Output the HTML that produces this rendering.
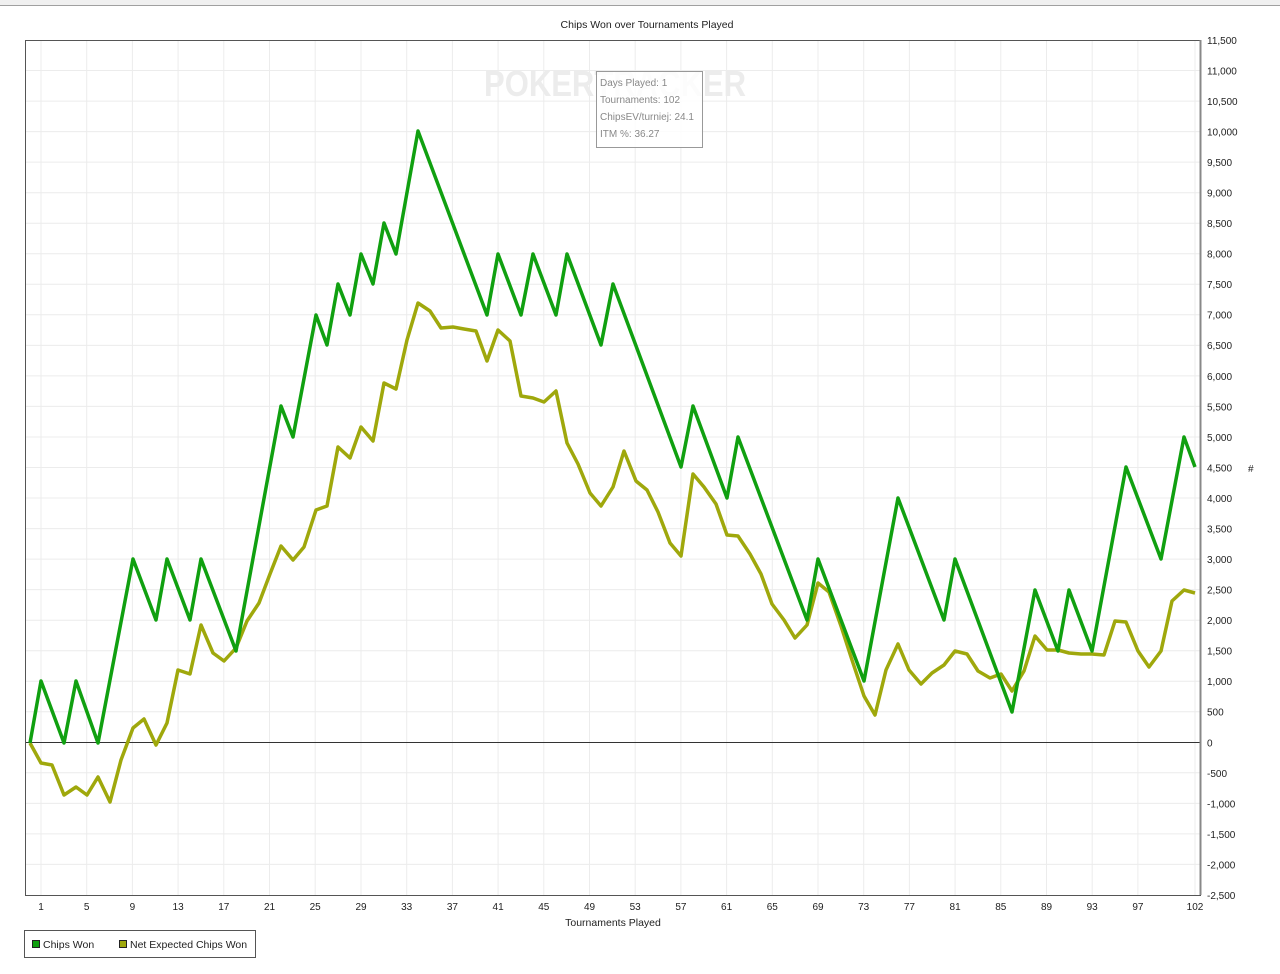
<!DOCTYPE html>
<html><head><meta charset="utf-8"><style>
html,body{margin:0;padding:0;background:#fff;width:1280px;height:974px;overflow:hidden}
svg text{font-family:"Liberation Sans",sans-serif;fill:#222}
</style></head><body>
<svg width="1280" height="974" xmlns="http://www.w3.org/2000/svg">
<rect x="0" y="0" width="1280" height="5" fill="#f0f0f0"/>
<line x1="0" y1="5.5" x2="1280" y2="5.5" stroke="#a0a0a0"/>
<text x="647" y="28" font-size="10.5" text-anchor="middle">Chips Won over Tournaments Played</text>
<g stroke="#ececec" stroke-width="1">
<line x1="25" x2="1200" y1="70.5" y2="70.5"/><line x1="25" x2="1200" y1="101.1" y2="101.1"/><line x1="25" x2="1200" y1="131.6" y2="131.6"/><line x1="25" x2="1200" y1="162.1" y2="162.1"/><line x1="25" x2="1200" y1="192.7" y2="192.7"/><line x1="25" x2="1200" y1="223.2" y2="223.2"/><line x1="25" x2="1200" y1="253.7" y2="253.7"/><line x1="25" x2="1200" y1="284.3" y2="284.3"/><line x1="25" x2="1200" y1="314.8" y2="314.8"/><line x1="25" x2="1200" y1="345.4" y2="345.4"/><line x1="25" x2="1200" y1="375.9" y2="375.9"/><line x1="25" x2="1200" y1="406.4" y2="406.4"/><line x1="25" x2="1200" y1="437" y2="437"/><line x1="25" x2="1200" y1="467.5" y2="467.5"/><line x1="25" x2="1200" y1="498" y2="498"/><line x1="25" x2="1200" y1="528.6" y2="528.6"/><line x1="25" x2="1200" y1="559.1" y2="559.1"/><line x1="25" x2="1200" y1="589.6" y2="589.6"/><line x1="25" x2="1200" y1="620.2" y2="620.2"/><line x1="25" x2="1200" y1="650.7" y2="650.7"/><line x1="25" x2="1200" y1="681.3" y2="681.3"/><line x1="25" x2="1200" y1="711.8" y2="711.8"/><line x1="25" x2="1200" y1="772.8" y2="772.8"/><line x1="25" x2="1200" y1="803.4" y2="803.4"/><line x1="25" x2="1200" y1="833.9" y2="833.9"/><line x1="25" x2="1200" y1="864.4" y2="864.4"/>
<line y1="40" y2="895" x1="41" x2="41"/><line y1="40" y2="895" x1="86.7" x2="86.7"/><line y1="40" y2="895" x1="132.4" x2="132.4"/><line y1="40" y2="895" x1="178.1" x2="178.1"/><line y1="40" y2="895" x1="223.8" x2="223.8"/><line y1="40" y2="895" x1="269.5" x2="269.5"/><line y1="40" y2="895" x1="315.2" x2="315.2"/><line y1="40" y2="895" x1="361" x2="361"/><line y1="40" y2="895" x1="406.7" x2="406.7"/><line y1="40" y2="895" x1="452.4" x2="452.4"/><line y1="40" y2="895" x1="498.1" x2="498.1"/><line y1="40" y2="895" x1="543.8" x2="543.8"/><line y1="40" y2="895" x1="589.5" x2="589.5"/><line y1="40" y2="895" x1="635.2" x2="635.2"/><line y1="40" y2="895" x1="680.9" x2="680.9"/><line y1="40" y2="895" x1="726.6" x2="726.6"/><line y1="40" y2="895" x1="772.3" x2="772.3"/><line y1="40" y2="895" x1="818" x2="818"/><line y1="40" y2="895" x1="863.7" x2="863.7"/><line y1="40" y2="895" x1="909.4" x2="909.4"/><line y1="40" y2="895" x1="955.1" x2="955.1"/><line y1="40" y2="895" x1="1000.8" x2="1000.8"/><line y1="40" y2="895" x1="1046.5" x2="1046.5"/><line y1="40" y2="895" x1="1092.2" x2="1092.2"/><line y1="40" y2="895" x1="1137.9" x2="1137.9"/><line y1="40" y2="895" x1="1195" x2="1195"/>
</g>
<text x="484" y="96" font-size="36" font-weight="bold" textLength="262" lengthAdjust="spacingAndGlyphs" style="fill:#ececec">POKERTRACKER</text>
<line x1="25" x2="1200" y1="742.5" y2="742.5" stroke="#333" stroke-width="1"/>
<rect x="25.5" y="40.5" width="1175" height="855" fill="none" stroke="#555"/>
<line x1="1200.5" y1="40" x2="1200.5" y2="895" stroke="#888" stroke-width="2"/>
<polyline fill="none" stroke="#9fa80c" stroke-width="3.5" stroke-linejoin="round" points="30,743 41,763 52,765 64,795 76,787 87,795 98,777 110,802 121,760 133,728 144,719 156,745 167,723 178,670 190,674 201,625 213,653 224,661 236,648 247,621 259,603 270,574 281,546 293,560 304,547 316,510 327,506 338,447 350,458 361,427 373,441 384,383 396,389 407,340 418,303 430,311 441,328 453,327 464,329 476,331 487,361 498,330 510,341 521,396 533,398 544,402 556,391 567,443 578,464 590,493 601,506 613,487 624,451 636,481 647,490 658,512 670,543 681,556 693,474 704,487 716,504 727,535 738,536 750,554 761,574 772,604 784,620 795,638 807,625 818,583 829,592 841,626 852,660 864,696 875,715 886,670 898,644 909,670 921,684 932,673 944,665 955,651 967,654 978,671 990,678 1001,674 1012,691 1024,671 1035,636 1047,650 1058,650 1069,653 1081,654 1092,654 1104,655 1115,621 1126,622 1138,651 1149,667 1161,651 1172,601 1184,590 1195,593"/>
<polyline fill="none" stroke="#10a010" stroke-width="3.5" stroke-linejoin="round" points="30,743 41,681 64,743 76,681 98,743 133,559 156,620 167,559 190,620 201,559 236,651 281,406 293,437 316,315 327,345 338,284 350,315 361,254 373,284 384,223 396,254 418,131 487,315 498,254 521,315 533,254 556,315 567,254 601,345 613,284 681,467 693,406 727,498 738,437 807,620 818,559 864,681 898,498 944,620 955,559 1012,712 1035,590 1058,651 1069,590 1092,651 1126,467 1161,559 1184,437 1195,467"/>
<g font-size="10">
<text x="1207" y="44">11,500</text><text x="1207" y="74.5">11,000</text><text x="1207" y="105">10,500</text><text x="1207" y="135.5">10,000</text><text x="1207" y="166">9,500</text><text x="1207" y="196.5">9,000</text><text x="1207" y="227">8,500</text><text x="1207" y="257.5">8,000</text><text x="1207" y="288">7,500</text><text x="1207" y="318.5">7,000</text><text x="1207" y="349">6,500</text><text x="1207" y="380">6,000</text><text x="1207" y="410.5">5,500</text><text x="1207" y="441">5,000</text><text x="1207" y="471.5">4,500</text><text x="1207" y="502">4,000</text><text x="1207" y="532.5">3,500</text><text x="1207" y="563">3,000</text><text x="1207" y="593.5">2,500</text><text x="1207" y="624">2,000</text><text x="1207" y="654.5">1,500</text><text x="1207" y="685">1,000</text><text x="1207" y="715.5">500</text><text x="1207" y="746.5">0</text><text x="1207" y="777">-500</text><text x="1207" y="807.5">-1,000</text><text x="1207" y="838">-1,500</text><text x="1207" y="868.5">-2,000</text><text x="1207" y="899">-2,500</text>
</g>
<text x="1248" y="472" font-size="10">#</text>
<g font-size="10" text-anchor="middle">
<text x="41" y="910">1</text><text x="86.7" y="910">5</text><text x="132.4" y="910">9</text><text x="178.1" y="910">13</text><text x="223.8" y="910">17</text><text x="269.5" y="910">21</text><text x="315.2" y="910">25</text><text x="361" y="910">29</text><text x="406.7" y="910">33</text><text x="452.4" y="910">37</text><text x="498.1" y="910">41</text><text x="543.8" y="910">45</text><text x="589.5" y="910">49</text><text x="635.2" y="910">53</text><text x="680.9" y="910">57</text><text x="726.6" y="910">61</text><text x="772.3" y="910">65</text><text x="818" y="910">69</text><text x="863.7" y="910">73</text><text x="909.4" y="910">77</text><text x="955.1" y="910">81</text><text x="1000.8" y="910">85</text><text x="1046.5" y="910">89</text><text x="1092.2" y="910">93</text><text x="1137.9" y="910">97</text><text x="1195" y="910">102</text>
</g>
<text x="613" y="926" font-size="10.5" text-anchor="middle">Tournaments Played</text>
<rect x="596.5" y="71.5" width="106" height="76" fill="#fff" fill-opacity="0.85" stroke="#999"/>
<g font-size="10"><text x="600" y="86" style="fill:#888">Days Played: 1</text><text x="600" y="103" style="fill:#888">Tournaments: 102</text><text x="600" y="120" style="fill:#888">ChipsEV/turniej: 24.1</text><text x="600" y="137" style="fill:#888">ITM %: 36.27</text></g>
<rect x="24.5" y="930.5" width="231" height="27" fill="#fff" stroke="#555"/>
<rect x="32.5" y="940.5" width="7" height="7" fill="#10a010" stroke="#222"/>
<text x="43" y="948" font-size="10.5">Chips Won</text>
<rect x="119.5" y="940.5" width="7" height="7" fill="#9fa80c" stroke="#222"/>
<text x="130" y="948" font-size="10.5">Net Expected Chips Won</text>
</svg>
</body></html>
